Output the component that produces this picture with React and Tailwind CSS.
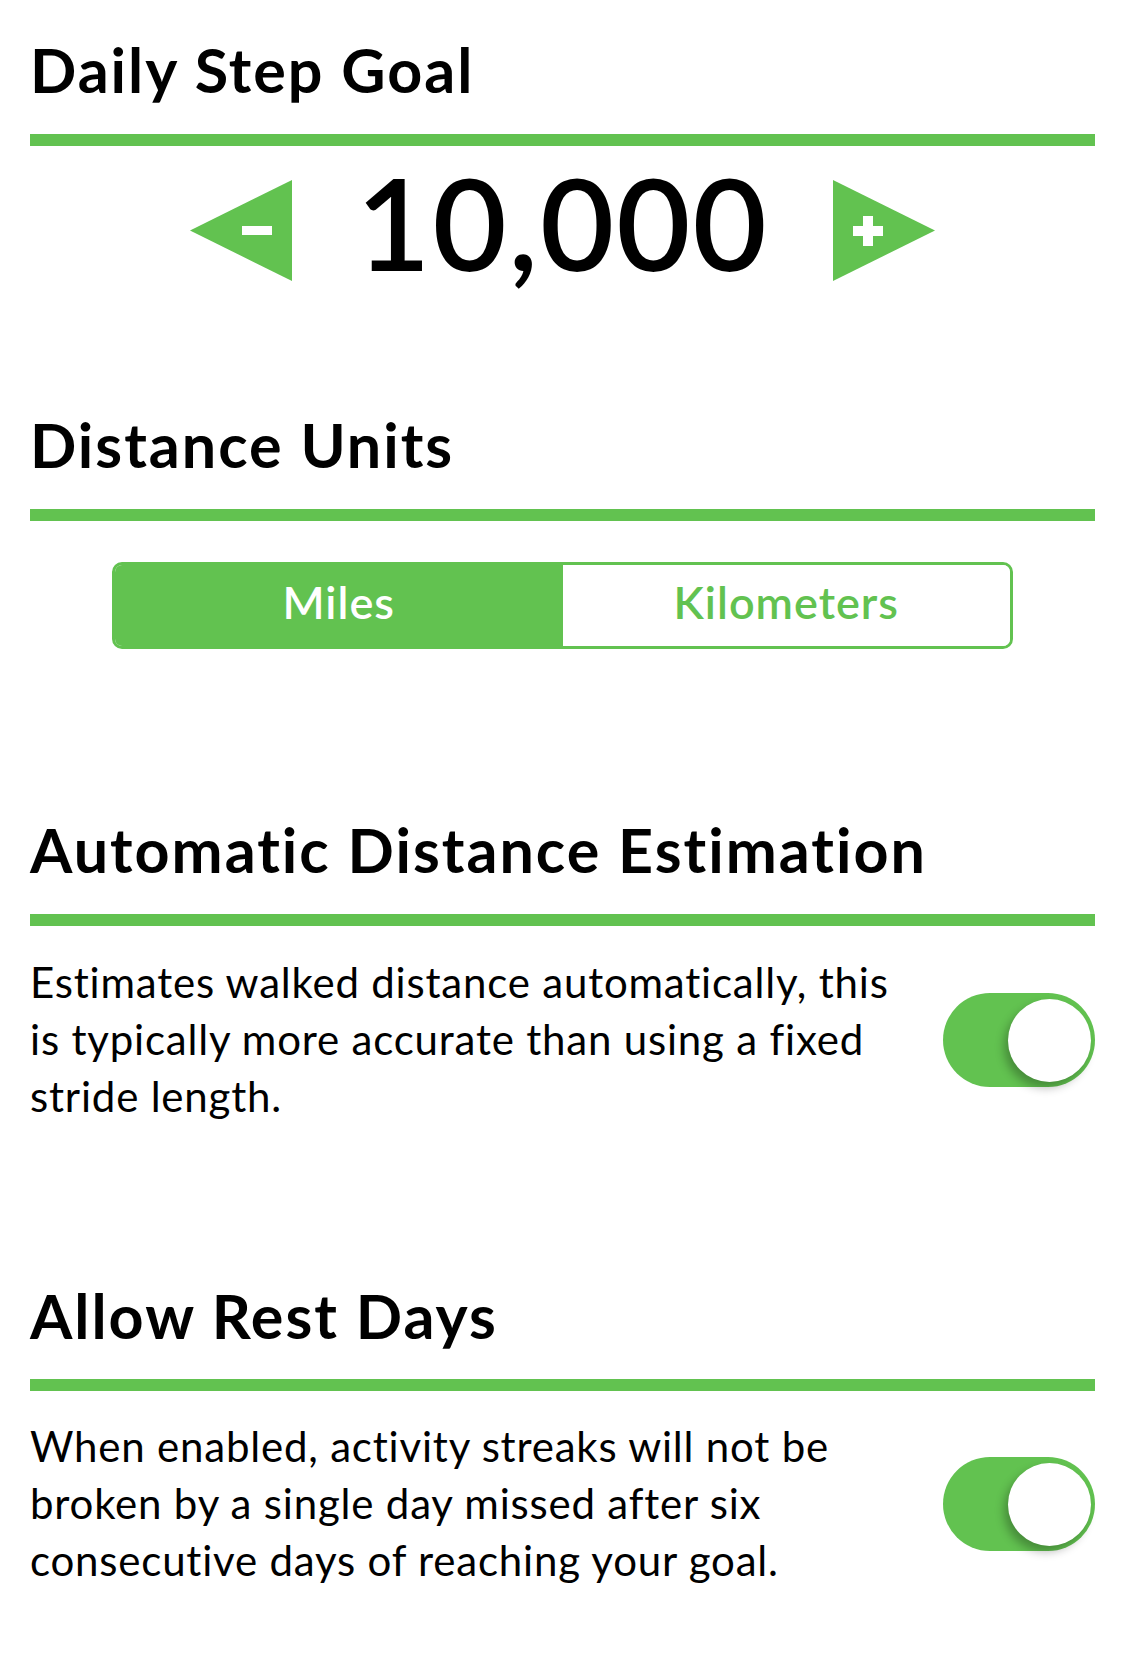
import React from "react";

const G = "#62c250";

function Toggle() {
  return (
    <div className="relative w-[152px] h-[94px] shrink-0 rounded-full bg-[#62c250]">
      <div className="absolute right-[4px] top-[6px] w-[83px] h-[83px] rounded-full bg-white shadow-[-4px_6px_10px_rgba(0,0,0,0.28)]" />
    </div>
  );
}

function Heading({ children, className }) {
  return (
    <h2 className={"text-[61px] font-bold leading-none text-black tracking-[2px] " + className}>
      {children}
    </h2>
  );
}

function Bar({ className }) {
  return <div className={"h-[12px] bg-[#62c250] " + className} />;
}

export default function App() {
  return (
    <div
      className="w-[1125px] min-h-[1654px] bg-white px-[30px] text-black"
      style={{ fontFamily: "Lato, 'Noto Sans', sans-serif" }}
    >
      <Heading className="pt-[39px]">Daily Step Goal</Heading>
      <Bar className="mt-[34px]" />

      <div className="mt-[12px] flex justify-center items-start gap-[64px]">
        <svg width="102" height="101" viewBox="0 0 102 101" className="mt-[22px] shrink-0">
          <polygon points="102,0 0,50.5 102,101" fill={G} />
          <rect x="52" y="46" width="30" height="9" fill="#fff" />
        </svg>
        <div className="text-[128px] leading-none font-semibold tracking-[2px] h-[128px]">10,000</div>
        <svg width="102" height="101" viewBox="0 0 102 101" className="mt-[22px] shrink-0">
          <polygon points="0,0 102,50.5 0,101" fill={G} />
          <rect x="20" y="46" width="30" height="10" fill="#fff" />
          <rect x="30" y="36" width="10" height="30" fill="#fff" />
        </svg>
      </div>

      <Heading className="mt-[128px]">Distance Units</Heading>
      <Bar className="mt-[34px]" />

      <div className="mt-[41px] mx-[82px] flex h-[87px] rounded-[10px] border-[3px] border-[#62c250] overflow-hidden">
        <div className="flex-1 flex items-center justify-center pb-[6px] bg-[#62c250] text-white text-[45px] font-semibold tracking-[1px]">
          Miles
        </div>
        <div className="flex-1 flex items-center justify-center pb-[6px] bg-white text-[#62c250] text-[45px] font-semibold tracking-[1px]">
          Kilometers
        </div>
      </div>

      <Heading className="mt-[170px]">Automatic Distance Estimation</Heading>
      <Bar className="mt-[34px]" />

      <div className="mt-[28px] flex items-center justify-between">
        <p className="text-[42px] leading-[57px] tracking-[0.8px] whitespace-nowrap">
          Estimates walked distance automatically, this
          <br />
          is typically more accurate than using a fixed
          <br />
          stride length.
        </p>
        <Toggle />
      </div>

      <Heading className="mt-[160px]">Allow Rest Days</Heading>
      <Bar className="mt-[33px]" />

      <div className="mt-[27px] flex items-center justify-between">
        <p className="text-[42px] leading-[57px] tracking-[0.8px] whitespace-nowrap">
          When enabled, activity streaks will not be
          <br />
          broken by a single day missed after six
          <br />
          consecutive days of reaching your goal.
        </p>
        <Toggle />
      </div>
    </div>
  );
}
